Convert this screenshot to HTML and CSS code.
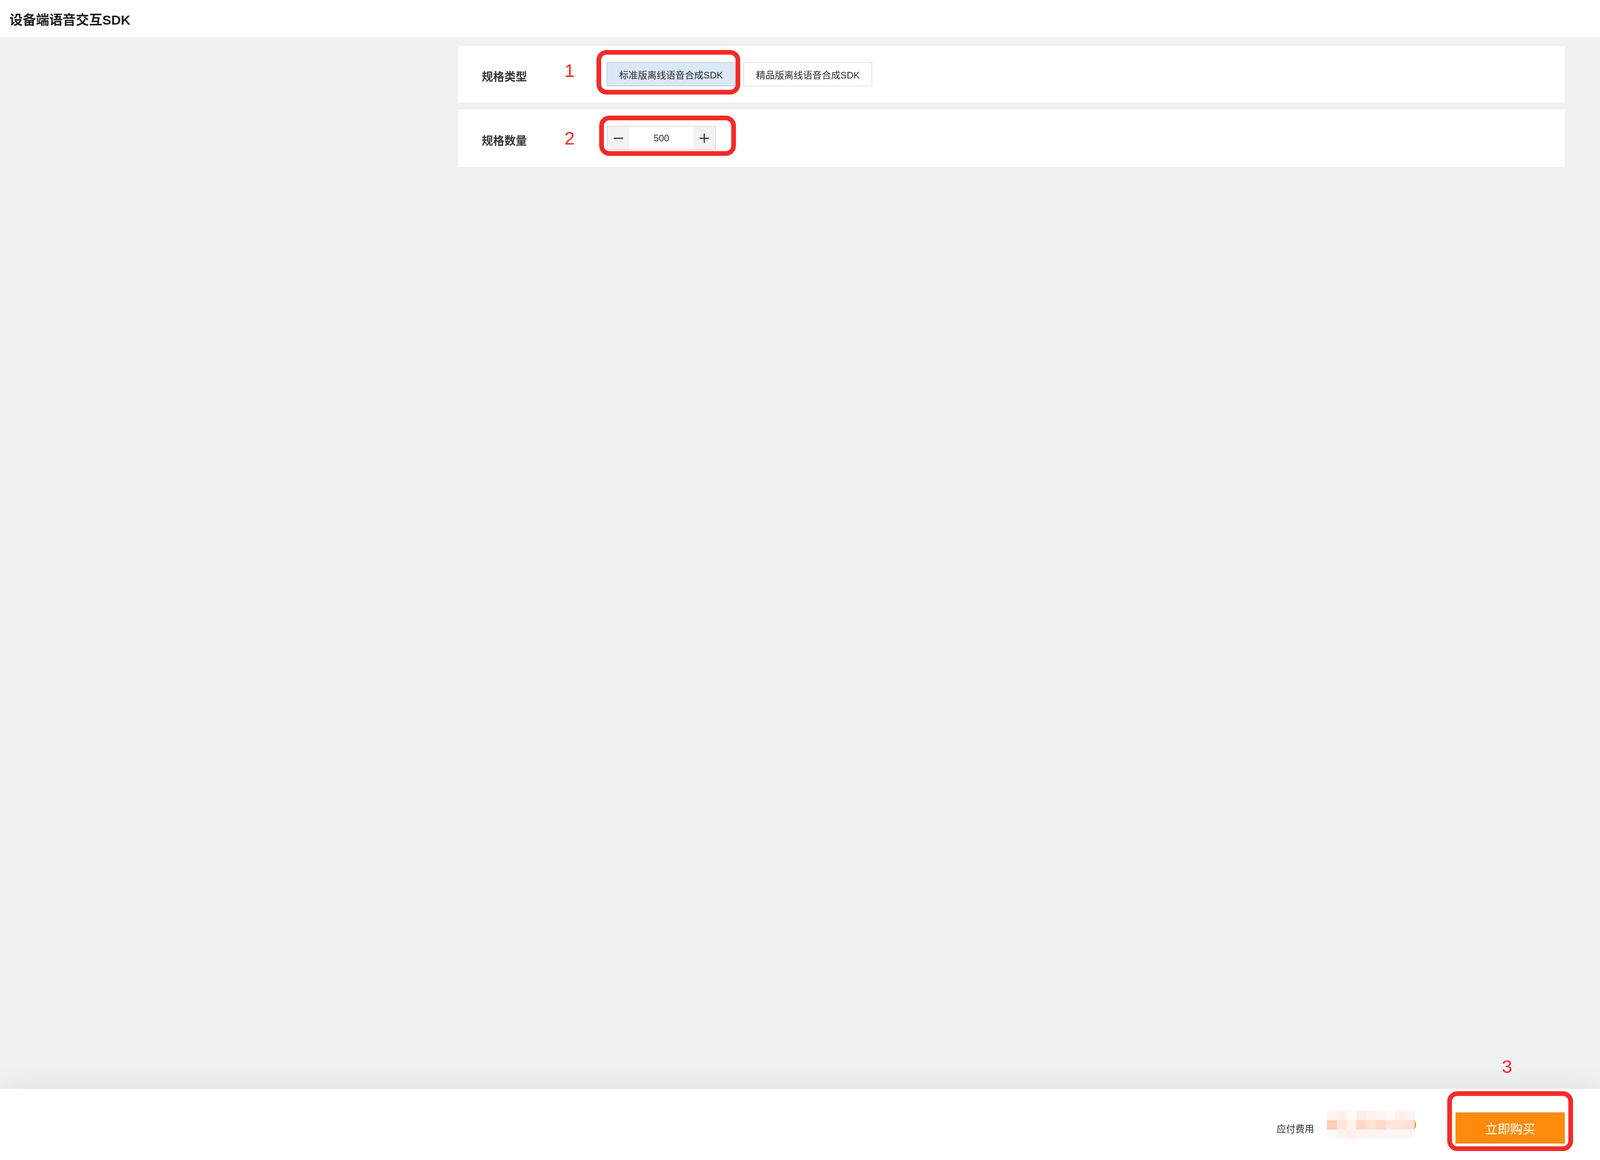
FILE: index.html
```html
<!DOCTYPE html>
<html lang="zh-CN">
<head>
    <meta charset="UTF-8">
    <meta name="viewport" content="width=device-width, initial-scale=1.0">
    <title>设备端语音交互SDK</title>
    <link rel="stylesheet" href="styles.css">
</head>
<body>
    <div class="page">
        <header class="topbar">
            <h1 class="title">设备端语音交互SDK</h1>
        </header>

        <main class="content">
            <section class="panel">
                <div class="spec-row">
                    <div class="spec-label">规格类型</div>
                    <div class="marker marker-up">1</div>
                    <div class="options">
                        <div class="annot annot-type">
                            <button class="opt opt-active">标准版离线语音合成SDK</button>
                        </div>
                        <button class="opt">精品版离线语音合成SDK</button>
                    </div>
                </div>
                <div class="spec-row spec-row-count">
                    <div class="spec-label">规格数量</div>
                    <div class="marker">2</div>
                    <div class="options">
                        <div class="annot annot-count">
                            <div class="stepper">
                                <button class="step-btn">
                                    <svg width="26" height="26" viewBox="0 0 26 26"><path d="M1 13h24" stroke="#333" stroke-width="3"/></svg>
                                </button>
                                <input class="step-input" type="text" value="500">
                                <button class="step-btn">
                                    <svg width="26" height="26" viewBox="0 0 26 26"><path d="M1 13h24M13 1v24" stroke="#333" stroke-width="3"/></svg>
                                </button>
                            </div>
                        </div>
                    </div>
                </div>
            </section>
        </main>

        <footer class="buybar">
            <span class="pay-label">应付费用</span>
            <div class="price-mosaic">
                <span></span><span></span><span></span><span></span><span></span><span></span><span></span><span></span><span></span>
                <span></span><span></span><span></span><span></span><span></span><span></span><span></span><span></span><span></span>
                <span></span><span></span><span></span><span></span><span></span><span></span><span></span><span></span><span></span>
            </div>
            <div class="annot annot-buy">
                <span class="marker marker-3">3</span>
                <button class="buy-btn">立即购买</button>
            </div>
        </footer>
    </div>
</body>
</html>
```

FILE: styles.css
```css
body{
    margin: 0;
    background-color: #f0f1f3;
    font-family: "Liberation Sans", "Noto Sans CJK SC", sans-serif;
    color: #333;
}
button, input{
    font-family: inherit;
}
.page{
    display: flex;
    flex-direction: column;
    min-height: 100vh;
}

/* top title bar */
.topbar{
    height: 96px;
    background-color: #fff;
    display: flex;
    align-items: center;
    padding-left: 24px;
}
.title{
    margin: 0;
    font-size: 34px;
    font-weight: bold;
    color: #1f1f1f;
}

/* spec panel */
.content{
    flex: 1;
    padding: 22px 2.2vw 0 28.64vw;
}
.panel{
    display: flex;
    flex-direction: column;
    gap: 18px;
}
.spec-row{
    background-color: #fff;
    height: 144px;
    padding-left: 60px;
    display: grid;
    grid-template-columns: 212px 108px 1fr;
    align-items: center;
}
.spec-row-count{
    height: 147px;
}
.spec-label{
    font-size: 29px;
    font-weight: bold;
    color: #383838;
    padding-top: 8px;
}
.marker{
    color: #f42b27;
    font-size: 47px;
    line-height: 1;
}
.marker-up{
    margin-bottom: 20px;
}
.options{
    display: flex;
    align-items: center;
    gap: 21px;
}
.opt{
    height: 62px;
    padding: 0 30px;
    font-size: 24px;
    color: #333;
    background-color: #fff;
    border: 2px solid #e2e2e2;
    cursor: pointer;
}
.opt-active{
    background-color: #dbe8f6;
    border-color: #b6d4ee;
}

/* stepper */
.stepper{
    display: flex;
    width: 280px;
    height: 63px;
    box-sizing: border-box;
    border: 2px solid #dcdcdc;
}
.step-btn{
    width: 56px;
    border: none;
    background-color: #f2f2f2;
    display: flex;
    align-items: center;
    justify-content: center;
    padding: 0;
}
.step-input{
    width: 164px;
    border: none;
    text-align: center;
    font-size: 24px;
    color: #333;
    padding: 0;
    outline: none;
}

/* red annotation boxes */
.annot{
    position: relative;
}
.annot::after{
    content: "";
    position: absolute;
    box-sizing: border-box;
    border: 12px solid #f42b27;
    border-radius: 26px;
    pointer-events: none;
}
.annot-type::after{
    left: -26px;
    top: -31px;
    width: 368px;
    height: 114px;
}
.annot-count::after{
    left: -19px;
    top: -26px;
    width: 350px;
    height: 103px;
}
.annot-buy::after{
    left: -21px;
    top: -54px;
    width: 322px;
    height: 153px;
}
.marker-3{
    position: absolute;
    left: 119px;
    top: -141px;
}

/* bottom bar */
.buybar{
    height: 182px;
    box-sizing: border-box;
    background-color: #fff;
    box-shadow: 0 0 80px rgba(0, 0, 0, 0.08);
    display: flex;
    justify-content: flex-end;
    align-items: center;
    padding: 18px 2.2vw 0 0;
    position: relative;
}
.pay-label{
    font-size: 24px;
    color: #333;
    margin-right: 33px;
}
.price-mosaic{
    display: grid;
    grid-template-columns: repeat(9, 25px);
    grid-template-rows: repeat(3, 24px);
    margin-right: 104px;
    margin-bottom: 16px;
    position: relative;
}
.price-mosaic::after{
    content: "";
    position: absolute;
    right: -3px;
    top: 26px;
    width: 4px;
    height: 20px;
    border-right: 3px solid #ff8b0c;
    border-radius: 0 12px 12px 0;
}
.price-mosaic span:nth-child(1){ background: #fff3ef; }
.price-mosaic span:nth-child(2){ background: #ffeee9; }
.price-mosaic span:nth-child(3){ background: #fffaf8; }
.price-mosaic span:nth-child(4){ background: #ffece4; }
.price-mosaic span:nth-child(5){ background: #fff1ec; }
.price-mosaic span:nth-child(6){ background: #fff4ef; }
.price-mosaic span:nth-child(7){ background: #fffaf7; }
.price-mosaic span:nth-child(8){ background: #ffefea; }
.price-mosaic span:nth-child(9){ background: #fff4ef; }
.price-mosaic span:nth-child(10){ background: #ffccb4; }
.price-mosaic span:nth-child(11){ background: #ffe6dc; }
.price-mosaic span:nth-child(12){ background: #fff3ec; }
.price-mosaic span:nth-child(13){ background: #ffd6c5; }
.price-mosaic span:nth-child(14){ background: #ffe3d8; }
.price-mosaic span:nth-child(15){ background: #ffd9c8; }
.price-mosaic span:nth-child(16){ background: #ffe5dc; }
.price-mosaic span:nth-child(17){ background: #ffe2d6; }
.price-mosaic span:nth-child(18){ background: #ffdfd3; }
.price-mosaic span:nth-child(19){ background: #fff8f6; }
.price-mosaic span:nth-child(20){ background: #fff3ee; }
.price-mosaic span:nth-child(21){ background: #ffefec; }
.price-mosaic span:nth-child(22){ background: #fff3ef; }
.price-mosaic span:nth-child(23){ background: #fff4f1; }
.price-mosaic span:nth-child(24){ background: #fff6f4; }
.price-mosaic span:nth-child(25){ background: #fff6f3; }
.price-mosaic span:nth-child(26){ background: #fff4ef; }
.price-mosaic span:nth-child(27){ background: #fff5f1; }
.buy-btn{
    width: 280px;
    height: 80px;
    border: none;
    background-color: #ff8b0c;
    color: #fff;
    font-size: 32px;
    cursor: pointer;
}
```
